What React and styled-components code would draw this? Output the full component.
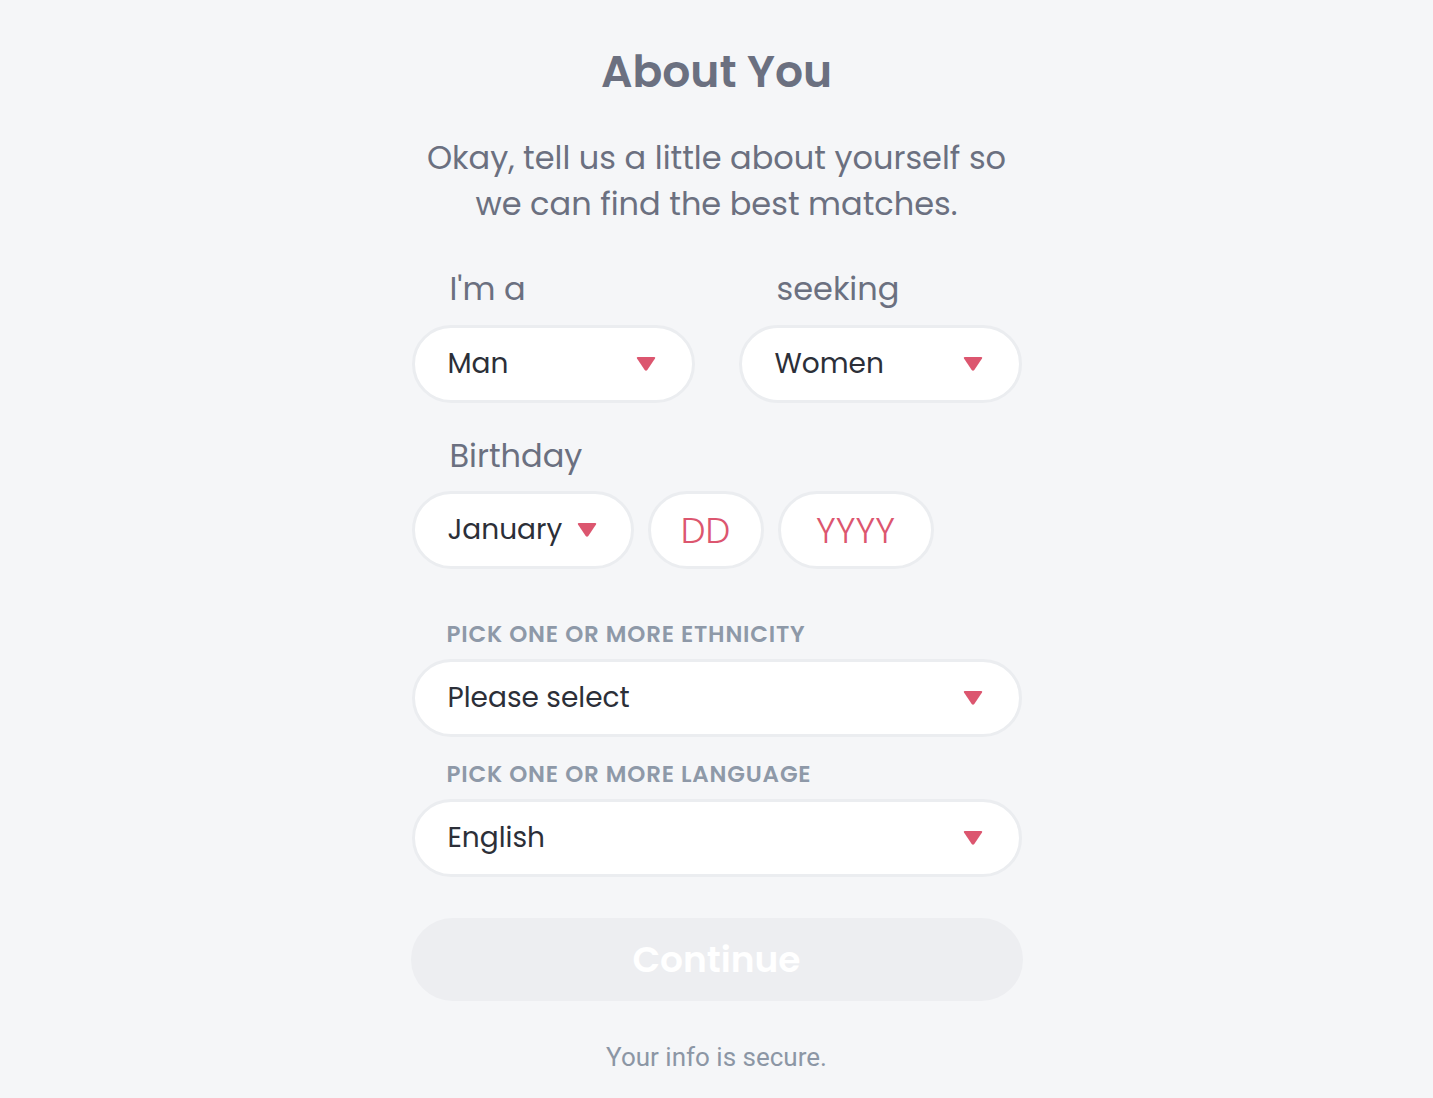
import React from 'react';
import styled, { createGlobalStyle } from 'styled-components';

const Global = createGlobalStyle`
  body {
    margin: 0;
    background: #f5f6f8;
    font-family: "Poppins", "Open Sans", "Noto Sans", sans-serif;
  }
`;

function Caret(){
    return <svg width="20" height="14" viewBox="0 0 20 14">
        <path d="M1 1.5 Q0.2 0 2 0 L18 0 Q19.8 0 19 1.5 L11.3 13 Q10 14.6 8.7 13 Z" fill="#dc566f"/>
    </svg>;
}

function Select({value, width, compact}){
    return <Field $width={width} $compact={compact}>
        <Value>{value}</Value>
        <Caret/>
    </Field>;
}

export default function App(){
    return <>
        <Global/>
        <Page>
            <Title>About You</Title>
            <Lead>Okay, tell us a little about yourself so<br/>we can find the best matches.</Lead>

            <Pair>
                <Column>
                    <Label>I'm a</Label>
                    <Select value="Man"/>
                </Column>
                <Column>
                    <Label>seeking</Label>
                    <Select value="Women"/>
                </Column>
            </Pair>

            <Label $top={33}>Birthday</Label>
            <DateRow>
                <Select value="January" width={222} compact/>
                <DatePart $width={116}>DD</DatePart>
                <DatePart $width={156}>YYYY</DatePart>
            </DateRow>

            <Caption $top={50}>Pick one or more ethnicity</Caption>
            <Select value="Please select"/>

            <Caption $top={22}>Pick one or more language</Caption>
            <Select value="English"/>

            <Continue disabled>Continue</Continue>
            <Secure>Your info is secure.</Secure>
        </Page>
    </>;
}

const Page = styled.div`
  width: 610px;
  margin: 0 auto;
  padding: 44px 0 30px;
  display: flex;
  flex-direction: column;
`;
const Title = styled.h1`
  margin: 0;
  font-size: 44px;
  line-height: 56px;
  font-weight: 600;
  color: #6b7080;
  text-align: center;
`;
const Lead = styled.p`
  margin: 35px 0 0;
  font-size: 32px;
  line-height: 46px;
  color: #6b7080;
  text-align: center;
`;
const Pair = styled.div`
  display: grid;
  grid-template-columns: 1fr 1fr;
  gap: 44px;
  margin-top: 42px;
`;
const Column = styled.div`
  display: flex;
  flex-direction: column;
`;
const Label = styled.div`
  margin: ${p => p.$top || 0}px 0 16px;
  padding-left: 38px;
  font-size: 32px;
  line-height: 40px;
  color: #6b7080;
`;
const Field = styled.div`
  box-sizing: border-box;
  width: ${p => p.$width ? p.$width + 'px' : '100%'};
  height: 78px;
  display: flex;
  align-items: center;
  justify-content: space-between;
  padding: 0 ${p => p.$compact ? 34 : 36}px 0 33px;
  background: #fff;
  border: 3px solid #ebedf0;
  border-radius: 40px;
`;
const Value = styled.span`
  font-size: 28px;
  color: #2c2f38;
`;
const DateRow = styled.div`
  display: flex;
  gap: 14px;
  margin-top: -1px;
`;
const DatePart = styled.div`
  box-sizing: border-box;
  width: ${p => p.$width}px;
  height: 78px;
  display: flex;
  align-items: center;
  justify-content: center;
  background: #fff;
  border: 3px solid #ebedf0;
  border-radius: 40px;
  font-size: 35px;
  font-weight: 300;
  color: #dc566f;
`;
const Caption = styled.div`
  margin: ${p => p.$top}px 0 10px;
  padding-left: 35px;
  font-size: 23px;
  line-height: 30px;
  font-weight: 600;
  letter-spacing: 0.8px;
  text-transform: uppercase;
  color: #8e99a8;
`;
const Continue = styled.button`
  margin: 41px -1px 0;
  height: 83px;
  border: none;
  border-radius: 42px;
  background: #edeef1;
  color: #fff;
  font-family: inherit;
  font-size: 36px;
  font-weight: 600;
`;
const Secure = styled.div`
  margin-top: 41px;
  font-family: Roboto, "Liberation Sans", sans-serif;
  font-size: 26px;
  line-height: 30px;
  color: #8c96a5;
  text-align: center;
`;
